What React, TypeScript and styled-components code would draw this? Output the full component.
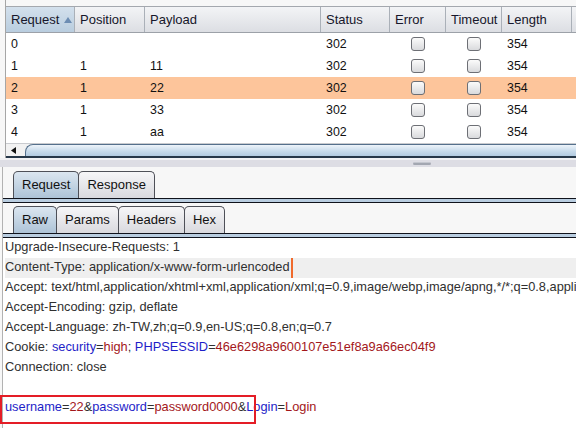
import styled, { createGlobalStyle, css } from "styled-components";

const COLS = "69px 70px 176px 69px 56px 56px 70px 40px";

const GlobalStyle = createGlobalStyle`
  html, body {
    margin: 0;
    padding: 0;
    background: #f7f7f7;
    overflow: hidden;
  }
  body {
    font-family: "Liberation Sans", Arial, sans-serif;
  }
`;

interface ResultRow {
  request: string;
  position: string;
  payload: string;
  status: string;
  length: string;
}

const rows: ResultRow[] = [
  { request: "0", position: "", payload: "", status: "302", length: "354" },
  { request: "1", position: "1", payload: "11", status: "302", length: "354" },
  { request: "2", position: "1", payload: "22", status: "302", length: "354" },
  { request: "3", position: "1", payload: "33", status: "302", length: "354" },
  { request: "4", position: "1", payload: "aa", status: "302", length: "354" },
];

const SELECTED_ROW = 2;

type Kind = "plain" | "name" | "value";
type Token = [string, Kind];

const P = (t: string): Token => [t, "plain"];
const N = (t: string): Token => [t, "name"];
const V = (t: string): Token => [t, "value"];

const requestLines: Token[][] = [
  [P("Upgrade-Insecure-Requests: 1")],
  [P("Content-Type: application/x-www-form-urlencoded")],
  [
    P(
      "Accept: text/html,application/xhtml+xml,application/xml;q=0.9,image/webp,image/apng,*/*;q=0.8,application/signed-exchange;v=b3"
    ),
  ],
  [P("Accept-Encoding: gzip, deflate")],
  [P("Accept-Language: zh-TW,zh;q=0.9,en-US;q=0.8,en;q=0.7")],
  [
    P("Cookie: "),
    N("security"),
    P("="),
    V("high"),
    P("; "),
    N("PHPSESSID"),
    P("="),
    V("46e6298a9600107e51ef8a9a66ec04f9"),
  ],
  [P("Connection: close")],
  [],
  [
    N("username"),
    P("="),
    V("22"),
    P("&"),
    N("password"),
    P("="),
    V("password0000"),
    P("&"),
    N("Login"),
    P("="),
    V("Login"),
  ],
];

const CARET_LINE = 1;
const BODY_LINE = 8;

function SortArrow() {
  return (
    <svg width="8" height="6" viewBox="0 0 8 6">
      <path d="M4 0 L8 6 L0 6 Z" fill="#6d8db3" />
    </svg>
  );
}

function LeftArrow() {
  return (
    <svg width="5" height="7" viewBox="0 0 5 7">
      <path d="M0 3.5 L5 0 L5 7 Z" fill="#111" />
    </svg>
  );
}

export default function App() {
  const headers = ["Request", "Position", "Payload", "Status", "Error", "Timeout", "Length", ""];

  return (
    <>
      <GlobalStyle />
      <S.Page>
        <S.Results>
          <S.HeaderRow>
            {headers.map((h, i) => (
              <S.HeaderCell key={i} $sorted={i === 0}>
                {h}
                {i === 0 && (
                  <S.Arrow>
                    <SortArrow />
                  </S.Arrow>
                )}
              </S.HeaderCell>
            ))}
          </S.HeaderRow>
          {rows.map((r, i) => (
            <S.Row key={r.request} $selected={i === SELECTED_ROW}>
              <S.Cell>{r.request}</S.Cell>
              <S.Cell>{r.position}</S.Cell>
              <S.Cell>{r.payload}</S.Cell>
              <S.Cell>{r.status}</S.Cell>
              <S.CheckCell>
                <S.Check />
              </S.CheckCell>
              <S.CheckCell>
                <S.Check />
              </S.CheckCell>
              <S.Cell>{r.length}</S.Cell>
              <S.Cell />
            </S.Row>
          ))}
          <S.HScroll>
            <S.ScrollButton>
              <LeftArrow />
            </S.ScrollButton>
            <S.ScrollThumb />
          </S.HScroll>
        </S.Results>

        <S.Splitter>
          <S.Grip />
        </S.Splitter>

        <S.Lower>
          <S.TabStrip $top={4}>
            <S.Tab $active>Request</S.Tab>
            <S.Tab>Response</S.Tab>
          </S.TabStrip>
          <S.Rule />
          <S.TabStrip $top={3}>
            <S.Tab $active>Raw</S.Tab>
            <S.Tab>Params</S.Tab>
            <S.Tab>Headers</S.Tab>
            <S.Tab>Hex</S.Tab>
          </S.TabStrip>
          <S.Rule />
          <S.Editor>
            {requestLines.map((line, i) => (
              <S.Line key={i} $current={i === CARET_LINE}>
                {line.map(([text, kind], j) => (
                  <S.Tok key={j} $kind={kind}>
                    {text}
                  </S.Tok>
                ))}
                {i === CARET_LINE && <S.Caret />}
                {i === BODY_LINE && <S.Mark />}
              </S.Line>
            ))}
          </S.Editor>
        </S.Lower>
      </S.Page>
    </>
  );
}

const S = {
  Page: styled.div`
    width: 576px;
    height: 428px;
    overflow: hidden;
    display: flex;
    flex-direction: column;
    background: #f7f7f7;
  `,
  Results: styled.div`
    margin-left: 5px;
    padding-top: 6px;
    border-left: 1px solid #a6a6a6;
    display: flex;
    flex-direction: column;
    width: 620px;
  `,
  HeaderRow: styled.div`
    display: grid;
    grid-template-columns: ${COLS};
    height: 27px;
    box-sizing: border-box;
    border-top: 1px solid #a4a8ae;
    border-bottom: 1px solid #9ca1a8;
  `,
  HeaderCell: styled.div<{ $sorted?: boolean }>`
    display: flex;
    align-items: center;
    padding-left: 5px;
    font-size: 13px;
    color: #16162a;
    border-right: 1px solid #aab0b8;
    background: ${({ $sorted }) =>
      $sorted
        ? "linear-gradient(#d3e0ec, #b9cddf)"
        : "linear-gradient(#f3f4f6, #dcdee3)"};
  `,
  Arrow: styled.span`
    display: inline-flex;
    margin-left: 5px;
    margin-top: 1px;
  `,
  Row: styled.div<{ $selected?: boolean }>`
    display: grid;
    grid-template-columns: ${COLS};
    height: 22px;
    background: ${({ $selected }) => ($selected ? "#fdc59b" : "#ffffff")};
  `,
  Cell: styled.div`
    display: flex;
    align-items: center;
    padding-left: 5px;
    font-size: 12.4px;
    color: #111;
  `,
  CheckCell: styled.div`
    display: flex;
    align-items: center;
    justify-content: center;
  `,
  Check: styled.span`
    width: 12px;
    height: 12px;
    border: 1px solid #6d6f75;
    border-radius: 3px;
    background: linear-gradient(#fbfbfb, #d9dadd);
  `,
  HScroll: styled.div`
    display: flex;
    height: 15px;
    box-sizing: border-box;
    border-top: 1px solid #c9cbcf;
    border-bottom: 2px solid #263748;
    background: #f2f2f2;
  `,
  ScrollButton: styled.div`
    width: 15px;
    display: flex;
    align-items: center;
    justify-content: center;
    padding-right: 2px;
  `,
  ScrollThumb: styled.div`
    flex: 1;
    margin-left: 2px;
    border: 1px solid #55708c;
    border-right: none;
    border-bottom: none;
    border-radius: 8px 0 0 0;
    background: linear-gradient(#eef4fa, #c8dbeb 55%, #b2cae0);
  `,
  Splitter: styled.div`
    height: 7px;
    border-top: 2px solid #f1f1f3;
    background: #dddde4;
    display: flex;
    justify-content: flex-start;
    align-items: center;
    padding-left: 413px;
  `,
  Grip: styled.span`
    width: 18px;
    height: 3px;
    border-radius: 2px;
    background: #a3a7b1;
    border-top: 1px solid #c4c7cf;
    box-sizing: border-box;
  `,
  Lower: styled.div`
    flex: 1;
    margin-left: 2px;
    border-left: 1px solid #b2b2b2;
    display: flex;
    flex-direction: column;
    min-height: 0;
  `,
  TabStrip: styled.div<{ $top: number }>`
    display: flex;
    align-items: flex-end;
    padding: ${({ $top }) => $top}px 0 0 10px;
  `,
  Tab: styled.div<{ $active?: boolean }>`
    height: 27px;
    box-sizing: border-box;
    display: flex;
    align-items: center;
    padding: 0 8px 2px 8px;
    font-size: 13px;
    color: #111;
    border: 1px solid #4e5058;
    border-bottom: none;
    border-radius: 5px 5px 0 0;
    margin-right: -1px;
    ${({ $active }) =>
      $active
        ? css`
            background: linear-gradient(#dbe6f0, #adc3d7);
          `
        : css`
            background: linear-gradient(#f6f6f8, #d9d9de);
          `}
  `,
  Rule: styled.div`
    height: 5px;
    box-sizing: border-box;
    border-top: 1px solid #10131c;
    border-bottom: 1px solid #10131c;
    background: #b9cde0;
  `,
  Editor: styled.div`
    position: relative;
    flex: 1;
    background: #ffffff;
    padding-left: 2px;
    font-size: 12.8px;
    white-space: pre;
  `,
  Line: styled.div<{ $current?: boolean }>`
    position: relative;
    height: 20px;
    line-height: 18px;
    background: ${({ $current }) => ($current ? "#efefef" : "transparent")};
  `,
  Tok: styled.span<{ $kind: Kind }>`
    color: ${({ $kind }) =>
      $kind === "name" ? "#1e1ec8" : $kind === "value" ? "#a3171b" : "#303030"};
  `,
  Caret: styled.span`
    display: inline-block;
    vertical-align: top;
    width: 2px;
    height: 20px;
    margin-left: 1px;
    background: #f06a2c;
  `,
  Mark: styled.span`
    position: absolute;
    left: -5px;
    top: -3px;
    width: 256px;
    height: 29px;
    box-sizing: border-box;
    border: 2px solid #e41d26;
  `,
};
